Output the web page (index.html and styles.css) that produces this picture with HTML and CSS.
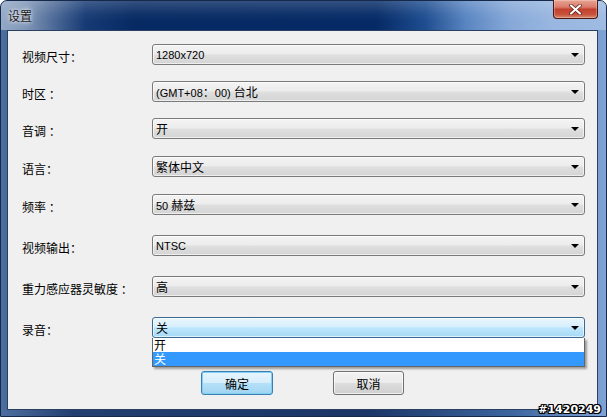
FILE: index.html
```html
<!DOCTYPE html>
<html lang="zh">
<head>
<meta charset="utf-8">
<title>设置</title>
<link rel="stylesheet" href="styles.css">
</head>
<body>
<div class="window">
  <div class="titlebar">
    <span class="title">设置</span>
    <div class="close">
      <svg width="13" height="11" viewBox="0 0 13 11"><path d="M2 1.5 L11 9.5 M11 1.5 L2 9.5" stroke="#5a1a12" stroke-width="3.6" stroke-linecap="round"/><path d="M2 1.5 L11 9.5 M11 1.5 L2 9.5" stroke="#ffffff" stroke-width="2.2" stroke-linecap="round"/></svg>
    </div>
  </div>
  <div class="client">
    <div class="form">
      <div class="row"><span class="label">视频尺寸：</span><div class="combo"><span class="val">1280x720</span><span class="arrow"></span></div></div>
      <div class="row"><span class="label">时区 ：</span><div class="combo"><span class="val">(GMT+08<span class="zh">：</span>00) <span class="zh">台北</span></span><span class="arrow"></span></div></div>
      <div class="row"><span class="label">音调 ：</span><div class="combo"><span class="val"><span class="zh">开</span></span><span class="arrow"></span></div></div>
      <div class="row r17"><span class="label">语言：</span><div class="combo"><span class="val"><span class="zh">繁体中文</span></span><span class="arrow"></span></div></div>
      <div class="row r17"><span class="label">频率 ：</span><div class="combo"><span class="val">50 <span class="zh">赫兹</span></span><span class="arrow"></span></div></div>
      <div class="row r20"><span class="label">视频输出：</span><div class="combo"><span class="val">NTSC</span><span class="arrow"></span></div></div>
      <div class="row r20"><span class="label">重力感应器灵敏度 ：</span><div class="combo"><span class="val"><span class="zh">高</span></span><span class="arrow"></span></div></div>
      <div class="row r20"><span class="label">录音：</span><div class="combo open"><span class="val"><span class="zh">关</span></span><span class="arrow"></span></div></div>
    </div>
    <div class="buttons">
      <button class="btn default">确定</button>
      <button class="btn">取消</button>
    </div>
    <ul class="dropdown">
      <li>开</li>
      <li class="sel">关</li>
    </ul>
  </div>
  <div class="watermark">#1420249</div>
</div>
</body>
</html>
```

FILE: styles.css
```css
html, body {
  margin: 0;
  padding: 0;
  background: #ffffff;
}

.window {
  position: relative;
  box-sizing: border-box;
  width: 607px;
  height: 417px;
  border: 1px solid #16294a;
  border-radius: 7px 7px 0 0;
  padding: 0 8px 6px 6px;
  background: linear-gradient(90deg, #4d6f9f 0%, #233f70 12%, #1a3566 60%, #3e669f 85%, #7ea3d4 100%);
  display: flex;
  flex-direction: column;
  font-family: "Noto Sans CJK SC", "Liberation Sans", sans-serif;
}

.titlebar {
  height: 29px;
  margin: 0 -8px 0 -6px;
  padding: 0 8px 0 7px;
  display: flex;
  align-items: center;
  position: relative;
  border-radius: 6px 6px 0 0;
  background:
    linear-gradient(180deg, rgba(255,255,255,0.18) 0%, rgba(255,255,255,0.04) 45%, rgba(0,0,0,0) 70%),
    linear-gradient(90deg, #93a9c6 0%, #8197b8 4%, #4a6795 9%, #163a74 14%, #072a63 22%, #052a66 62%, #1e4d8f 70%, #5a86c2 77%, #86a8d8 84%, #98b6e0 91%, #9fbbe2 100%);
}

.title {
  font-size: 12px;
  line-height: 14px;
  color: #1a1a1a;
  text-shadow: 0 0 6px rgba(255,255,255,0.9), 0 0 3px rgba(255,255,255,0.8);
  margin-top: 1px;
}

.close {
  position: absolute;
  right: 8px;
  top: -1px;
  width: 45px;
  height: 19px;
  box-sizing: border-box;
  border: 1px solid #4b1713;
  border-top: none;
  border-radius: 0 0 4px 4px;
  background: linear-gradient(180deg, #e8a594 0%, #d9796a 40%, #c2402d 52%, #c8523c 80%, #d98c72 100%);
  box-shadow: inset 0 0 0 1px rgba(255,255,255,0.25);
  display: flex;
  align-items: center;
  justify-content: center;
}

.client {
  position: relative;
  flex: 1;
  border: 1px solid #2a4062;
  background: #f0f0f0;
  display: flex;
  flex-direction: column;
}

.form {
  display: flex;
  flex-direction: column;
  padding: 13px 12px 0 14px;
}

.row {
  display: flex;
  align-items: center;
  height: 21px;
  margin-top: 16px;
}
.row:first-child { margin-top: 0; }
.row.r17 { margin-top: 17px; }
.row.r20 { margin-top: 20px; }

.label {
  width: 130px;
  flex: none;
  font-size: 12px;
  color: #000000;
  margin-top: 3px;
}

.combo {
  box-sizing: border-box;
  width: 433px;
  height: 21px;
  border: 1px solid #7a7a7a;
  border-radius: 3px;
  background: linear-gradient(180deg, #f4f4f4 0%, #ececec 48%, #dfdfdf 52%, #d4d4d4 100%);
  box-shadow: inset 0 0 0 1px rgba(255,255,255,0.6);
  display: flex;
  align-items: center;
  justify-content: space-between;
  padding: 0 5px 0 3px;
}

.combo.open {
  border-color: #3c6a92;
  background: linear-gradient(180deg, #eaf6fd 0%, #d7effc 45%, #bde6fd 52%, #a7d9f5 100%);
}

.val {
  font-family: "Liberation Sans", "Noto Sans CJK SC", sans-serif;
  font-size: 11px;
  color: #000000;
  white-space: pre;
}

.zh {
  font-family: "Noto Sans CJK SC", sans-serif;
  font-size: 12px;
}

.arrow {
  width: 0;
  height: 0;
  border-left: 4px solid transparent;
  border-right: 4px solid transparent;
  border-top: 4px solid #000000;
}

.buttons {
  display: flex;
  gap: 60px;
  padding-left: 193px;
  margin-top: 33px;
}

.btn {
  box-sizing: border-box;
  width: 71px;
  height: 24px;
  border: 1px solid #707070;
  border-radius: 3px;
  background: linear-gradient(180deg, #f2f2f2 0%, #ebebeb 48%, #dddddd 52%, #cfcfcf 100%);
  box-shadow: inset 0 0 0 1px rgba(255,255,255,0.7);
  font-family: "Noto Sans CJK SC", sans-serif;
  font-size: 12px;
  color: #000000;
  padding: 0;
}

.btn.default {
  width: 72px;
  border-color: #3c7fb1;
  background: linear-gradient(180deg, #e8f5fc 0%, #d6eefb 48%, #b5e0f8 52%, #a0d4f2 100%);
  box-shadow: inset 0 0 0 1px #7fd0f2;
}

.dropdown {
  position: absolute;
  left: 144px;
  top: 307px;
  width: 433px;
  box-sizing: border-box;
  margin: 0;
  padding: 0;
  list-style: none;
  background: #ffffff;
  border: 1px solid #646464;
  border-top: none;
  box-shadow: 2px 2px 2px rgba(0,0,0,0.35);
  font-family: "Noto Sans CJK SC", sans-serif;
  font-size: 12px;
  line-height: 14px;
  color: #000000;
}

.dropdown li {
  height: 14px;
  padding-left: 1px;
}

.dropdown li.sel {
  background: #3399ff;
  color: #ffffff;
}

.watermark {
  position: absolute;
  right: 5px;
  bottom: 0;
  font-family: "DejaVu Sans", sans-serif;
  font-weight: bold;
  font-size: 11px;
  line-height: 13px;
  color: #ffffff;
  text-shadow: 1px 0 0 #000, -1px 0 0 #000, 0 1px 0 #000, 0 -1px 0 #000, 1px 1px 0 #000, -1px -1px 0 #000, 1px -1px 0 #000, -1px 1px 0 #000;
}
```
